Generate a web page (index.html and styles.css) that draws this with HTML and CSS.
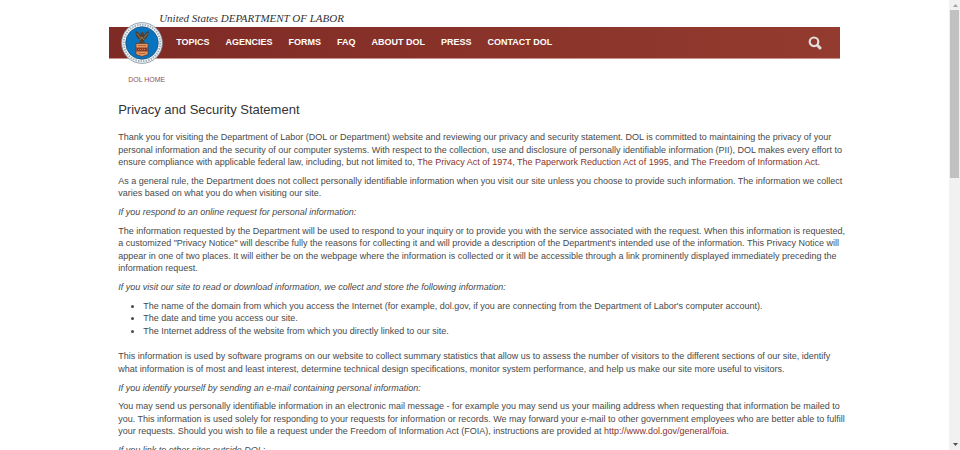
FILE: index.html
```html
<!DOCTYPE html>
<html lang="en">
<head>
<meta charset="utf-8">
<meta name="viewport" content="width=device-width, initial-scale=1">
<title>Privacy and Security Statement</title>
<link rel="stylesheet" href="styles.css">
</head>
<body>
<div class="viewport">
  <div class="page">
    <header class="header">
      <div class="brand">United States DEPARTMENT OF LABOR</div>
      <div class="bar">
        <a class="seal" href="#" aria-label="Department of Labor home">
          <svg viewBox="0 0 42 42" aria-hidden="true">
            <circle cx="21" cy="21" r="20.4" fill="#f4f6f8" stroke="#7d8f9d" stroke-width=".8"/>
            <circle cx="21" cy="21" r="18.300" fill="none" stroke="#9fb0bd" stroke-width="2" stroke-dasharray="1.5 1.1"/>
            <circle cx="21" cy="21" r="16.300" fill="#0874c0" stroke="#234c70" stroke-width=".7"/>
            <path d="M14.500 9c2 .3 3.500 1.700 4.700 4.200l.5-2.200 1.500-1.200 1.300 1.200.6 2.200c1.200-2.500 2.700-3.900 4.700-4.200 0 3.500-1.200 6.500-3.200 8l-1.600 1 .8 3h-5.600l.8-3-1.600-1c-2-1.500-3.200-4.500-2.900-8z" fill="#51402f"/>
            <path d="M16 11.500l3.500 4.500M26.500 11.500l-3.500 4.500M19 18l2-3 2 3" fill="none" stroke="#a98858" stroke-width=".8"/>
            <path d="M15 21.500h12v11l-6 2-6-2z" fill="#e39a62" stroke="#5a3326" stroke-width=".7"/>
            <path d="M15.300 25.500h11.400v4h-11.400z" fill="#8c3a2c"/>
            <path d="M17 23.500h8M17.500 31.500h7" stroke="#b8643c" stroke-width="1.200"/>
            <path d="M17 27.500h8" stroke="#d78b55" stroke-width=".8" stroke-dasharray="1 1"/>
          </svg>
        </a>
        <nav class="nav" aria-label="Main">
          <a href="#">TOPICS</a>
          <a href="#">AGENCIES</a>
          <a href="#">FORMS</a>
          <a href="#">FAQ</a>
          <a href="#">ABOUT DOL</a>
          <a href="#">PRESS</a>
          <a href="#">CONTACT DOL</a>
        </nav>
        <button class="search" type="button" aria-label="Search">
          <svg viewBox="0 0 14 14" aria-hidden="true">
            <circle cx="6" cy="5.800" r="4.300" fill="none" stroke="currentColor" stroke-width="2.200"/>
            <path d="M9.300 9.200l2.700 2.700" stroke="currentColor" stroke-width="2.900" stroke-linecap="round"/>
          </svg>
        </button>
      </div>
    </header>
    <nav class="crumbs" aria-label="Breadcrumb"><a href="#">DOL HOME</a></nav>
    <main class="content">
      <h1>Privacy and Security Statement</h1>
      <p>Thank you for visiting the Department of Labor (DOL or Department) website and reviewing our privacy and security statement. DOL is committed to maintaining the privacy of your<br>
      personal information and the security of our computer systems. With respect to the collection, use and disclosure of personally identifiable information (PII), DOL makes every effort to<br>
      ensure compliance with applicable federal law, including, but not limited to, <a href="#">The Privacy Act of 1974</a>, <a href="#">The Paperwork Reduction Act of 1995</a>, and <a href="#">The Freedom of Information Act</a>.</p>
      <p>As a general rule, the Department does not collect personally identifiable information when you visit our site unless you choose to provide such information. The information we collect<br>
      varies based on what you do when visiting our site.</p>
      <p><em>If you respond to an online request for personal information:</em></p>
      <p>The information requested by the Department will be used to respond to your inquiry or to provide you with the service associated with the request. When this information is requested,<br>
      a customized "Privacy Notice" will describe fully the reasons for collecting it and will provide a description of the Department's intended use of the information. This Privacy Notice will<br>
      appear in one of two places. It will either be on the webpage where the information is collected or it will be accessible through a link prominently displayed immediately preceding the<br>
      information request.</p>
      <p><em>If you visit our site to read or download information, we collect and store the following information:</em></p>
      <ul>
        <li>The name of the domain from which you access the Internet (for example, dol.gov, if you are connecting from the Department of Labor's computer account).</li>
        <li>The date and time you access our site.</li>
        <li>The Internet address of the website from which you directly linked to our site.</li>
      </ul>
      <p>This information is used by software programs on our website to collect summary statistics that allow us to assess the number of visitors to the different sections of our site, identify<br>
      what information is of most and least interest, determine technical design specifications, monitor system performance, and help us make our site more useful to visitors.</p>
      <p><em>If you identify yourself by sending an e-mail containing personal information:</em></p>
      <p>You may send us personally identifiable information in an electronic mail message - for example you may send us your mailing address when requesting that information be mailed to<br>
      you. This information is used solely for responding to your requests for information or records. We may forward your e-mail to other government employees who are better able to fulfill<br>
      your requests. Should you wish to file a request under the Freedom of Information Act (FOIA), instructions are provided at <a href="#">http://www.dol.gov/general/foia</a>.</p>
      <p><em>If you link to other sites outside DOL:</em></p>
    </main>
  </div>
</div>
<div class="scrollbar" aria-hidden="true">
  <svg class="arrow" viewBox="0 0 10 10"><path d="M3 7h5L5.500 4z" fill="#a3a3a3"/></svg>
  <div class="track"><div class="thumb"></div></div>
  <svg class="arrow" viewBox="0 0 10 10"><path d="M3 3h5L5.500 6z" fill="#505050"/></svg>
</div>
</body>
</html>
```
FILE: styles.css
```css
* { box-sizing: border-box; }

body {
  display: flex;
  height: 100vh;
  margin: 0;
  overflow: hidden;
  background: #fff;
  color: #494949;
  font: 9px/1.4 "Liberation Sans", Arial, sans-serif;
}

a { color: #8a322b; text-decoration: none; }

.viewport { flex: 1; min-width: 0; overflow: hidden; }
.page { width: 77%; margin: 0 auto; }

.brand {
  height: 27px;
  padding: 11px 0 0 50px;
  color: #333;
  font: italic 11px/14px "Liberation Serif", Georgia, serif;
}

.bar {
  position: relative;
  display: flex;
  align-items: center;
  height: 32px;
  padding: 0 18px 0 67px;
  border-bottom: 1px solid #c9938c;
  background: linear-gradient(90deg, #7e2a25, #933b2e);
}

.seal { position: absolute; left: 12px; top: -5px; width: 42px; height: 42px; }
.seal svg, .search svg { display: block; width: 100%; height: 100%; }

.nav { display: flex; flex: 1; gap: 16px; }
.nav a { color: #fff; font-weight: bold; white-space: nowrap; }

.search {
  width: 14px;
  height: 14px;
  padding: 0;
  border: 0;
  background: none;
  color: #e3dddb;
}

.crumbs { padding: 16px 19px 0; font-size: 7px; line-height: 10px; }
.crumbs a { color: #985048; }

.content { padding: 17px 0 0 9px; white-space: nowrap; }

h1 {
  margin: 0 0 13px;
  color: #333;
  font-size: 13px;
  font-weight: normal;
  line-height: 16px;
}

p { margin: 0 0 6px; }
ul { margin: 0 0 13px; padding-left: 25px; }

.scrollbar {
  display: flex;
  flex-direction: column;
  width: 11px;
  padding-left: 1px;
  background: #f1f1f1;
}
.arrow { width: 10px; height: 10px; }
.track { flex: 1; }
.thumb { width: 9px; height: 39%; background: #c1c1c1; }
```
